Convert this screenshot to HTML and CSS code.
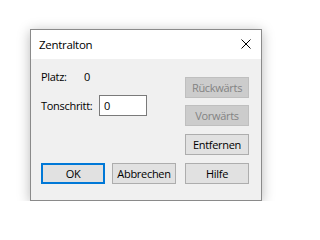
FILE: index.html
```html
<!DOCTYPE html>
<html lang="de">
<head>
<meta charset="utf-8">
<title>Zentralton</title>
<link rel="stylesheet" href="styles.css">
</head>
<body>
<div class="dialog">
  <div class="titlebar">
    <span class="title">Zentralton</span>
    <svg class="close" width="10" height="10" viewBox="0 0 10 10" aria-label="Schließen">
      <path d="M0.5 0.5 L9.5 9.5 M9.5 0.5 L0.5 9.5" stroke="#000" stroke-width="1" fill="none"/>
    </svg>
  </div>
  <div class="body">
    <div class="content">
      <div class="left">
        <div class="row platz">
          <span class="label label-platz">Platz:</span>
          <span class="value">0</span>
        </div>
        <div class="row ton">
          <span class="label label-ton">Tonschritt:</span>
          <div class="input">0</div>
        </div>
      </div>
      <div class="right">
        <button class="btn disabled b1">Rückwärts</button>
        <button class="btn disabled b2">Vorwärts</button>
        <button class="btn b3">Entfernen</button>
      </div>
    </div>
    <div class="footer">
      <button class="btn default ok">OK</button>
      <button class="btn cancel">Abbrechen</button>
      <button class="btn help">Hilfe</button>
    </div>
  </div>
</div>
</body>
</html>
```
FILE: styles.css
```css
html, body {
  margin: 0;
  padding: 0;
  background: #ffffff;
}
body {
  padding: 29px 0 0 30px;
  font-family: "Open Sans", "Noto Sans", sans-serif;
  font-size: 11px;
  letter-spacing: -0.3px;
  color: #000;
}
.dialog {
  box-sizing: border-box;
  width: 232px;
  height: 172px;
  border: 1px solid #8a8a8a;
  background: #f0f0f0;
  box-shadow: 0 2px 12px rgba(0, 0, 0, 0.28);
  display: flex;
  flex-direction: column;
}
.titlebar {
  height: 29px;
  background: #ffffff;
  display: flex;
  align-items: center;
  justify-content: space-between;
  padding: 0 10px 0 8px;
}
.title {
  font-size: 11.5px;
  line-height: 16px;
  margin-top: 1px;
}
.close {
  display: block;
  margin-top: -2px;
}
.body {
  flex: 1;
  padding: 0 12px 0 10px;
  display: flex;
  flex-direction: column;
}
.content {
  display: flex;
  justify-content: space-between;
}
.left {
  display: flex;
  flex-direction: column;
}
.row {
  display: flex;
  align-items: center;
  line-height: 16px;
}
.platz {
  margin-top: 10px;
}
.ton {
  margin-top: 10px;
}
.label-platz {
  width: 43px;
}
.label-ton {
  width: 58px;
}
.input {
  box-sizing: border-box;
  width: 48px;
  height: 21px;
  border: 1px solid #7a7a7a;
  background: #ffffff;
  padding: 0 0 0 4px;
  line-height: 19px;
}
.right {
  display: flex;
  flex-direction: column;
}
.btn {
  box-sizing: border-box;
  width: 64px;
  height: 21px;
  margin: 0;
  padding: 0;
  border: 1px solid #adadad;
  background: #e1e1e1;
  font-family: inherit;
  font-size: 11px;
  letter-spacing: -0.3px;
  color: #000;
  line-height: 17px;
  text-align: center;
}
.btn.disabled {
  background: #cccccc;
  border-color: #bfbfbf;
  color: #838383;
}
.btn.default {
  border: 2px solid #0078d7;
}
.b1 { margin-top: 18px; }
.b2 { margin-top: 7px; }
.b3 { margin-top: 8px; }
.footer {
  display: flex;
  margin-top: 8px;
}
.cancel { margin-left: 7px; }
.help { margin-left: 9px; }
```
